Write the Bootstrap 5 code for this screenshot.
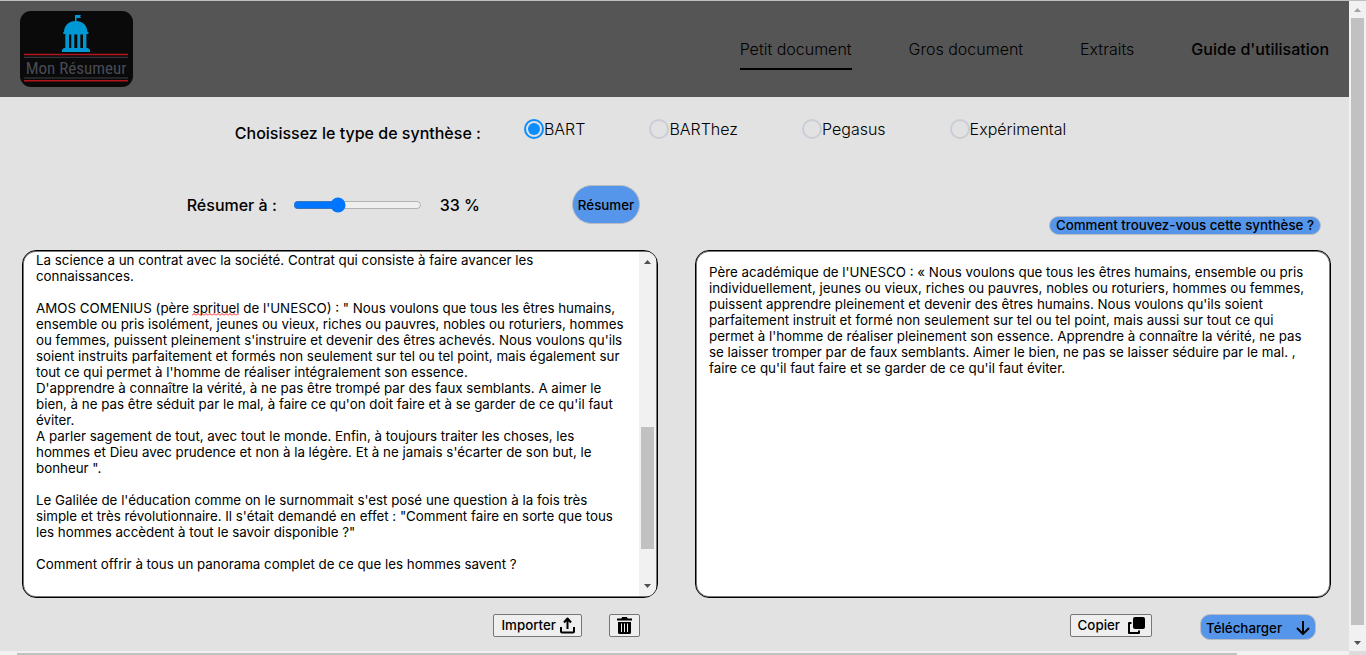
<!DOCTYPE html>
<html lang="fr">
<head>
<meta charset="utf-8">
<meta name="viewport" content="width=device-width, initial-scale=1">
<title>Mon Résumeur</title>
<link href="https://cdn.jsdelivr.net/npm/bootstrap@5.3.0/dist/css/bootstrap.min.css" rel="stylesheet">
<style>
  body { font-family: Inter, sans-serif; font-size: 16px; line-height: 20px; color: #000; background: #e2e2e2; border-top: 1px solid #bcbfbe; overflow: hidden; }
  button { font-size: revert; line-height: 16px; font-weight: 500; color: #000; }

  .site-header { background: #555; height: 96px; padding: 0 20px; }
  .logo-tile { width: 113px; height: 76px; margin-bottom: 1px; }
  .main-menu { gap: 57px; }
  .main-menu a { color: #000; text-decoration: none; font-weight: 300; padding: 11px 0 9px; border-bottom: 2px solid transparent; }
  .main-menu a.active { border-color: #000; }
  .main-menu a.guide { font-weight: 500; }

  .type-row { padding: 22px 48px 0 0; }
  .type-title { font-size: 16px; font-weight: 500; line-height: 20px; margin: 4px 43px 0 0; }
  .types { gap: 64px; }
  .types label { font-weight: 300; }
  .types input { appearance: none; width: 20px; height: 20px; margin: 0; border: 2px solid #c9cdd6; border-radius: 50%; }
  .types input:checked { border-color: #0a8dff; background: #0a8dff; background-clip: content-box; padding: 2px; }

  .panes { display: grid; grid-template-columns: 1fr 1fr; column-gap: 37px; padding: 0 18px 0 22px; }
  .tools { height: 107px; padding: 16px 18px 0 0; font-weight: 500; }
  .tools input { width: 129px; margin: 0 18px 0 16px; }
  .pill { background: #5596ea; border: 1px solid #b9bcc2; border-radius: 20px; }
  .go { height: 39px; width: 68px; padding: 0; margin-left: 92px; }
  .ask { padding: 0 6px 1px; border-radius: 10px; }
  .ask-row { padding: 0 10px 15px 0; }

  .sheet { height: 348px; border: 1px solid #000; padding: 1px; box-shadow: inset 0 0 0 1px #777; border-radius: 14px; background: #fff; overflow: hidden; }
  .sheet textarea { border: 0; outline: 0; resize: none; background: none; font-size: revert; line-height: 16px; font-weight: 400; color: #000; overflow: hidden; padding: 0 12px; }
  .sheet textarea.result { padding-top: 12px; }
  .typo { position: absolute; left: 169px; top: 62px; width: 47px; height: 3px; }

  .bar-v { background: #f1f1f1; }
  .bar-v svg { display: block; flex: none; }
  .bar-v .thumb, .bar-h .thumb { background: #c1c1c1; }
  .page-bar { width: 17px; }
  .page-bar .thumb { flex: 607; margin: 0 2px; }
  .page-bar .rest { flex: 9; }
  .text-bar { width: 17px; }
  .text-bar .before { flex: 158; }
  .text-bar .thumb { flex: 122; margin: 0 2px; }
  .text-bar .rest { flex: 30; }
  .bar-h { height: 4px; padding: 2px 0 0 17px; background: #f1f1f1; }
  .bar-h .thumb { flex: 1220; }
  .bar-h .rest { flex: 112; }
  .corner { height: 4px; background: #dcdcdc; }

  .actions { padding: 16px 18px 0 0; gap: 27px; }
  .result-actions { padding-right: 15px; gap: 48px; }
  .plain { background: #efefef; border: 1px solid #767676; border-radius: 2px; height: 23px; padding: 0 6px 1px 7px; }
  .trash { width: 31px; padding: 0; }
  .fetch { height: 26px; width: 116px; padding: 1px 5px 0; border-radius: 10px; }
</style>
</head>
<body class="d-flex vh-100">
<div class="flex-grow-1 d-flex flex-column">
  <header class="site-header d-flex align-items-center justify-content-between">
    <a href="#" aria-label="Mon Résumeur">
      <svg class="logo-tile d-block" viewBox="0 0 113 76">
        <rect width="113" height="76" rx="11" fill="#0a0a0a"/>
        <g fill="#0098d4">
          <path d="M55 4h6l-1 1.500 1 1.500h-4.500v4H55z"/>
          <path d="M44 21c0-6.500 5-11 11.700-11s11.700 4.500 11.700 11h1v2h-2v14h2v1.300H70V41H42v-2.700h1.300V37h2V23h-2v-2z"/>
        </g>
        <path d="M49 23.500h2.300V37H49zM54.300 23.500h3V37h-3zM60.300 23.500h2.700V37h-2.700z" fill="#0a0a0a"/>
        <path d="M4 43.500h104M4 69.700h104" stroke="#b3151b" stroke-width="1.500"/>
        <path d="M4 46.300h104M4 67h104" stroke="#3d4048" stroke-width="1"/>
        <text x="56" y="63" text-anchor="middle" font-family="'Roboto Condensed', Roboto, sans-serif" font-size="17" fill="#484b54">Mon Résumeur</text>
      </svg>
    </a>
    <nav class="main-menu d-flex">
      <a href="#" class="active">Petit document</a>
      <a href="#">Gros document</a>
      <a href="#">Extraits</a>
      <a href="#" class="guide">Guide d'utilisation</a>
    </nav>
  </header>

  <main class="flex-grow-1">
    <div class="type-row d-flex justify-content-center align-items-start" role="radiogroup" aria-labelledby="typeTitle">
      <h2 class="type-title" id="typeTitle">Choisissez le type de synthèse :</h2>
      <div class="types d-flex">
        <div class="d-flex"><input type="radio" name="type" id="bart" checked><label for="bart">BART</label></div>
        <div class="d-flex"><input type="radio" name="type" id="barthez"><label for="barthez">BARThez</label></div>
        <div class="d-flex"><input type="radio" name="type" id="pegasus"><label for="pegasus">Pegasus</label></div>
        <div class="d-flex"><input type="radio" name="type" id="exp"><label for="exp">Expérimental</label></div>
      </div>
    </div>

    <div class="panes">
      <div class="tools d-flex justify-content-end align-items-center">
        <label for="ratio">Résumer à :</label>
        <input type="range" id="ratio" min="0" max="100" value="33">
        <output for="ratio">33 %</output>
        <button type="button" class="pill go">Résumer</button>
      </div>
      <div class="ask-row d-flex justify-content-end align-items-end">
        <button type="button" class="pill ask">Comment trouvez-vous cette synthèse ?</button>
      </div>

      <div class="sheet d-flex position-relative">
        <textarea class="flex-grow-1" aria-label="Texte à résumer" spellcheck="false">La science a un contrat avec la société. Contrat qui consiste à faire avancer les connaissances.

AMOS COMENIUS (père sprituel de l'UNESCO) : " Nous voulons que tous les êtres humains, ensemble ou pris isolément, jeunes ou vieux, riches ou pauvres, nobles ou roturiers, hommes ou femmes, puissent pleinement s'instruire et devenir des êtres achevés. Nous voulons qu'ils soient instruits parfaitement et formés non seulement sur tel ou tel point, mais également sur tout ce qui permet à l'homme de réaliser intégralement son essence.
D'apprendre à connaître la vérité, à ne pas être trompé par des faux semblants. A aimer le bien, à ne pas être séduit par le mal, à faire ce qu'on doit faire et à se garder de ce qu'il faut éviter.
A parler sagement de tout, avec tout le monde. Enfin, à toujours traiter les choses, les hommes et Dieu avec prudence et non à la légère. Et à ne jamais s'écarter de son but, le bonheur ".

Le Galilée de l'éducation comme on le surnommait s'est posé une question à la fois très simple et très révolutionnaire. Il s'était demandé en effet : "Comment faire en sorte que tous les hommes accèdent à tout le savoir disponible ?"

Comment offrir à tous un panorama complet de ce que les hommes savent ?</textarea>
        <svg class="typo" aria-hidden="true"><defs><pattern id="wave" width="4" height="3" patternUnits="userSpaceOnUse"><path d="M0 2.500L2 .5 4 2.500" fill="none" stroke="#f00" stroke-width=".9"/></pattern></defs><rect width="100%" height="3" fill="url(#wave)"/></svg>
        <div class="bar-v text-bar d-flex flex-column" aria-hidden="true">
          <svg width="17" height="17"><path d="M5 12h7L8.500 8z" fill="#505050"/></svg>
          <div class="before"></div><div class="thumb"></div><div class="rest"></div>
          <svg width="17" height="17"><path d="M5 5h7L8.500 9z" fill="#505050"/></svg>
        </div>
      </div>
      <div class="sheet d-flex">
        <textarea class="result flex-grow-1" aria-label="Synthèse" spellcheck="false" readonly>Père académique de l'UNESCO : « Nous voulons que tous les êtres humains, ensemble ou pris individuellement, jeunes ou vieux, riches ou pauvres, nobles ou roturiers, hommes ou femmes, puissent apprendre pleinement et devenir des êtres humains. Nous voulons qu'ils soient parfaitement instruit et formé non seulement sur tel ou tel point, mais aussi sur tout ce qui permet à l'homme de réaliser pleinement son essence. Apprendre à connaître la vérité, ne pas se laisser tromper par de faux semblants. Aimer le bien, ne pas se laisser séduire par le mal. , faire ce qu'il faut faire et se garder de ce qu'il faut éviter.</textarea>
      </div>

      <div class="actions d-flex justify-content-end align-items-start">
        <button type="button" class="plain d-flex align-items-center">Importer
          <svg class="ms-1" width="15" height="17" viewBox="0 0 15 17" fill="none" stroke="#000" stroke-width="2"><path d="M1 10v4.500q0 1 1 1h11q1 0 1-1V10M7.500 12V2M4 5.500l3.500-4 3.500 4" stroke-linejoin="round"/></svg>
        </button>
        <button type="button" class="plain trash d-flex align-items-center justify-content-center" aria-label="Effacer">
          <svg width="15" height="17" viewBox="0 0 15 17"><path d="M0 1.500h4.500L5 0h5l.5 1.500H15v2H0zM1 5h13v10.500q0 1.500-1.500 1.500h-10Q1 17 1 15.500z"/><path d="M4.500 6.500v8.500M7.500 6.500v8.500M10.500 6.500v8.500" stroke="#efefef" stroke-width="1"/></svg>
        </button>
      </div>
      <div class="actions result-actions d-flex justify-content-end align-items-start">
        <button type="button" class="plain d-flex align-items-center">Copier
          <svg class="ms-2" width="17" height="17" viewBox="0 0 17 17"><rect x="5" width="12" height="12" rx="2"/><path d="M3.500 6H1v10h10v-2.500" fill="none" stroke="#000" stroke-width="2" stroke-linejoin="round"/></svg>
        </button>
        <button type="button" class="pill fetch d-flex align-items-center justify-content-between">Télécharger
          <svg width="14" height="14" viewBox="0 0 14 14" fill="none" stroke="#000" stroke-width="2"><path d="M7 0v13M1 7l6 6 6-6"/></svg>
        </button>
      </div>
    </div>
  </main>
  <div class="bar-h d-flex" aria-hidden="true"><div class="thumb"></div><div class="rest"></div></div>
</div>
<div class="bar-v page-bar d-flex flex-column flex-shrink-0" aria-hidden="true">
  <svg width="17" height="17"><path d="M5 11h7L8.500 7z" fill="#a3a3a3"/></svg>
  <div class="thumb"></div><div class="rest"></div>
  <svg width="17" height="17"><path d="M5 7h7L8.500 11z" fill="#505050"/></svg>
  <div class="corner"></div>
</div>
<script src="https://cdn.jsdelivr.net/npm/bootstrap@5.3.0/dist/js/bootstrap.bundle.min.js"></script>
</body>
</html>
